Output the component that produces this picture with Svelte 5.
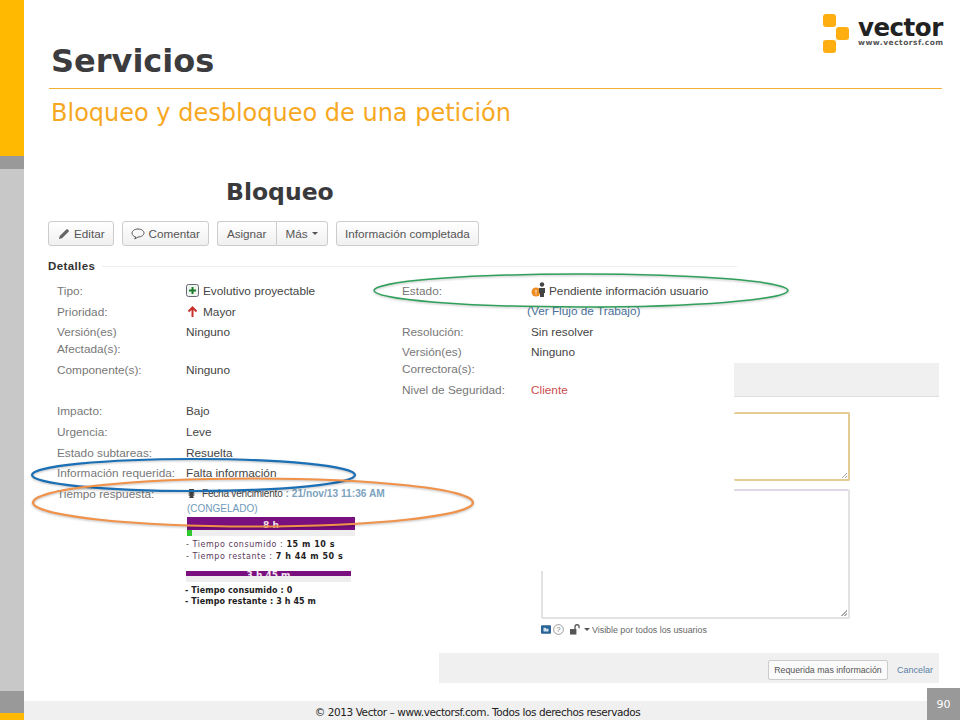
<script>
  const leftRows = [
    { label: 'Tipo:', value: 'Evolutivo proyectable', icon: 'plus' },
    { label: 'Prioridad:', value: 'Mayor', icon: 'up' },
    { label: 'Versión(es) Afectada(s):', value: 'Ninguno', tall: true },
    { label: 'Componente(s):', value: 'Ninguno', gap: true },
    { label: 'Impacto:', value: 'Bajo' },
    { label: 'Urgencia:', value: 'Leve' },
    { label: 'Estado subtareas:', value: 'Resuelta' },
    { label: 'Información requerida:', value: 'Falta información' }
  ]
</script>

<div class="slide">
  <aside class="rail">
    <div class="rail-top"></div>
    <div class="rail-band"></div>
    <div class="rail-mid"></div>
    <div class="rail-band rail-band-low"></div>
    <div class="rail-end"></div>
  </aside>

  <div class="page">
    <header class="head">
      <h1>Servicios</h1>
      <div class="logo">
        <svg class="logo-mark" viewBox="0 0 27 40" aria-hidden="true">
          <rect x="0" y="0" width="13" height="13" rx="3"/>
          <rect x="13" y="13" width="13" height="13" rx="3"/>
          <rect x="0" y="26" width="13" height="13" rx="3"/>
        </svg>
        <div class="logo-text">
          <span class="logo-name">vector</span>
          <span class="logo-url">www.vectorsf.com</span>
        </div>
      </div>
    </header>
    <h2>Bloqueo y desbloqueo de una petición</h2>
    <h3>Bloqueo</h3>

    <div class="toolbar">
      <button class="btn"><svg viewBox="0 0 14 12"><path d="M2 11l.7-3L9.300 1.400a1 1 0 011.400 0l.9.9a1 1 0 010 1.400L5 10.300z" fill="#666"/></svg>Editar</button>
      <button class="btn btn-comment"><svg viewBox="0 0 14 12"><path d="M7 1C3.700 1 1 2.800 1 5s2 3.600 3.600 3.900L3.800 11l3.200-2c3.300 0 6-1.800 6-4s-2.700-4-6-4z" fill="none" stroke="#555"/></svg>Comentar</button>
      <div class="btn-group">
        <button class="btn">Asignar</button>
        <button class="btn">Más<i class="caret"></i></button>
      </div>
      <button class="btn btn-done">Información completada</button>
    </div>

    <div class="section-title"><b>Detalles</b><span></span></div>

    <div class="columns">
      <div class="col-left">
        {#each leftRows as row}
          <div class="row" class:tall={row.tall} class:gap={row.gap}>
            <span class="lbl">{row.label}</span>
            <span class="val">
              {#if row.icon === 'plus'}
                <svg class="ico" viewBox="0 0 13 13"><rect x=".5" y=".5" width="12" height="12" rx="2" fill="#eef5ee" stroke="#667"/><path d="M6.500 3v7M3 6.500h7" stroke="#1c7a2c" stroke-width="2"/></svg>
              {:else if row.icon === 'up'}
                <svg class="ico" viewBox="0 0 13 13"><path d="M6.500 12V2.500M2.500 6.500l4-4 4 4" fill="none" stroke="#c9302c" stroke-width="2"/></svg>
              {/if}
              {row.value}
            </span>
          </div>
        {/each}
        <div class="row time-row">
          <span class="lbl">Tiempo respuesta:</span>
          <div class="sla">
            <div class="due">
              <svg class="clock" viewBox="0 0 9 12"><path d="M2 1h5v2l-1 1 2 1-2 1 2 1-2 1 1 2H2l1-2-2-1 2-1-2-1 2-1-1-1z" fill="#444"/></svg>
              <span class="due-lbl">Fecha vencimiento</span> <b>: 21/nov/13 11:36 AM</b>
            </div>
            <span class="frozen">(CONGELADO)</span>
            <div class="bar"><span>8 h</span></div>
            <div class="track"><i style="width:5px"></i></div>
            <div class="stat stat-first">- <span>Tiempo consumido</span> : <b>15 m 10 s</b></div>
            <div class="stat">- <span>Tiempo restante</span> : <b>7 h 44 m 50 s</b></div>
            <div class="bar bar-low"><span>3 h 45 m</span></div>
            <div class="track track-low"></div>
            <div class="stat stat-bold stat-first">- Tiempo consumido : 0</div>
            <div class="stat stat-bold">- Tiempo restante : 3 h 45 m</div>
          </div>
        </div>
      </div>

      <div class="col-right">
        <div class="row">
          <span class="lbl">Estado:</span>
          <span class="val val-state">
            <svg class="state" viewBox="0 0 17 15"><circle cx="5" cy="10" r="4.500" fill="#ee8c1f"/><path d="M5 8v2.500M5 11.500v1" stroke="#fff"/><circle cx="11" cy="2.500" r="2.200" fill="#444"/><path d="M8 6h6v5h-1v4H9v-4H8z" fill="#444"/></svg>
            Pendiente información usuario
          </span>
        </div>
        <a class="flow">(Ver Flujo de Trabajo)</a>
        <div class="row"><span class="lbl">Resolución:</span><span class="val">Sin resolver</span></div>
        <div class="row tall"><span class="lbl">Versión(es) Correctora(s):</span><span class="val">Ninguno</span></div>
        <div class="row"><span class="lbl">Nivel de Seguridad:</span><span class="val red">Cliente</span></div>
      </div>
    </div>

    <!-- restos del diálogo que asoman detrás de la captura -->
    <div class="dialog">
      <div class="dlg-head"></div>
      <div class="dlg-body">
        <div class="area area-focus"></div>
        <div class="area area-plain"></div>
        <div class="dlg-meta">
          <svg class="m-folder" viewBox="0 0 12 10"><rect width="12" height="10" rx="1" fill="#2a6496"/><path d="M3 3h2.500l1 1H9v3.500H3z" fill="#cfe0ee"/></svg>
          <svg class="m-help" viewBox="0 0 12 12"><circle cx="6" cy="6" r="5.300" fill="none" stroke="#777" stroke-width=".8"/><text x="6" y="9" text-anchor="middle">?</text></svg>
          <svg class="m-lock" viewBox="0 0 12 11"><rect x="0" y="5" width="7" height="6" fill="#555"/><path d="M5.500 5V2.500a2.200 2.200 0 014.400 0V4" fill="none" stroke="#555" stroke-width="1.400"/></svg>
          <i class="caret"></i>
          <span>Visible por todos los usuarios</span>
        </div>
      </div>
      <div class="dlg-foot">
        <button class="btn-req">Requerida mas información</button>
        <a>Cancelar</a>
      </div>
    </div>

    <svg class="marks" viewBox="0 0 936 720" aria-hidden="true">
      <ellipse cx="557" cy="290.500" rx="207" ry="16.500" stroke="#2ea05a"/>
      <ellipse cx="169.500" cy="475" rx="161.500" ry="16" stroke="#1a6fb5"/>
      <ellipse cx="229" cy="502.500" rx="220" ry="24" stroke="#f0924a"/>
    </svg>
  </div>

  <footer class="foot">
    <span>© 2013 Vector – www.vectorsf.com. Todos los derechos reservados</span>
  </footer>
  <div class="num">90</div>
</div>

<style>
  :global(body) { margin: 0; background: #fff; }

  .slide {
    position: relative;
    display: flex;
    width: 960px;
    height: 720px;
    overflow: hidden;
    background: #fff;
    font-family: "Liberation Sans", Arial, sans-serif;
  }

  .rail { display: flex; flex-direction: column; flex: 0 0 24px; z-index: 3; }
  .rail-top { height: 156px; background: #ffb900; }
  .rail-band { height: 13px; background: #999; }
  .rail-mid { flex: 1; background: #c8c8c8; }
  .rail-band-low { height: 22px; }
  .rail-end { height: 7px; background: #ffb900; }

  .page { position: relative; flex: 1; }

  .head {
    display: flex;
    justify-content: space-between;
    align-items: flex-start;
    height: 88px;
    margin: 0 18px 0 25px;
    padding: 0 0 0 2px;
    box-sizing: content-box;
    border-bottom: 1px solid #f2b132;
  }
  h1 {
    margin: 45px 0 0;
    font: bold 32px/1 "DejaVu Sans", Verdana, sans-serif;
    color: #3c3c3f;
  }
  .logo { display: flex; gap: 8px; margin: 14px -1px 0 0; }
  .logo-mark { width: 27px; height: 40px; fill: #ffae12; }
  .logo-text { display: flex; flex-direction: column; width: 85px; }
  .logo-name { font: bold 24.500px/20px "DejaVu Sans", sans-serif; color: #222; letter-spacing: -0.5px; margin-top: 4px; }
  .logo-url { font: bold 7.500px/9px "DejaVu Sans", sans-serif; color: #555; letter-spacing: .5px; white-space: nowrap; }

  h2 {
    margin: 11px 0 0 27px;
    font: 400 24px/27px "DejaVu Sans", Verdana, sans-serif;
    color: #f7a823;
  }
  h3 {
    margin: 51px 0 0 202px;
    font: bold 23.500px/28px "DejaVu Sans", Verdana, sans-serif;
    color: #3a3a3c;
  }

  .toolbar { display: flex; gap: 8px; margin: 15px 0 0 24px; }
  .btn {
    display: inline-flex;
    align-items: center;
    gap: 3px;
    height: 25px;
    padding: 0 8px;
    box-sizing: border-box;
    border: 1px solid #ccc;
    border-radius: 3px;
    background: linear-gradient(#fff, #f0f0f0);
    font: 11.700px "Liberation Sans", Arial, sans-serif;
    color: #555;
  }
  .btn svg { width: 14px; height: 12px; }
  .btn .caret { margin-left: 1px; }
  .btn-comment { gap: 4px; }
  .btn-done { padding: 0 8.500px; }
  .btn-group { display: flex; }
  .btn-group .btn { padding: 0 9px; }
  .btn-group .btn:first-child { border-radius: 3px 0 0 3px; border-right: 0; }
  .btn-group .btn:last-child { border-radius: 0 3px 3px 0; }
  .caret {
    display: inline-block;
    width: 0;
    height: 0;
    border: 3px solid transparent;
    border-top: 3px solid #555;
    border-bottom: 0;
  }

  .section-title { display: flex; align-items: center; gap: 7px; margin: 14px 0 0 24px; width: 689px; }
  .section-title b { font-size: 11.500px; letter-spacing: .4px; color: #333; }
  .section-title span { flex: 1; height: 1px; background: #eee; }

  .columns { display: flex; margin: 10px 0 0 33px; }
  .col-left { width: 345px; font-size: 11.800px; }
  .col-right { font-size: 11.800px; }

  .row { display: flex; height: 20.700px; line-height: 18px; color: #444; }
  .row.tall { height: 38px; }
  .row.gap { height: 41px; }
  .lbl { flex: 0 0 129px; width: 129px; padding-top: 1px; color: #777; line-height: 17px; }
  .tall .lbl { padding-right: 40px; box-sizing: border-box; }
  .val { display: inline-flex; align-items: flex-start; gap: 4px; white-space: nowrap; }
  .val-state { gap: 1px; }
  .ico { width: 13px; height: 13px; margin-top: 2px; }
  .state { width: 17px; height: 15px; flex: none; }
  .red { color: #cc4d4d; }
  .flow { display: block; margin: -1px 0 3px 125px; color: #4a6f9a; height: 18px; line-height: 18px; }

  .time-row { height: auto; }
  .sla { width: 170px; font-size: 10px; margin-top: 2px; }
  .due { display: flex; align-items: center; gap: 3px; height: 14px; line-height: 14px; white-space: nowrap; color: #444; }
  .due b { color: #7da3c0; font-size: 10.200px; }
  .due-lbl { letter-spacing: -.2px; }
  .clock { width: 9px; height: 12px; margin: 0 3px 0 1px; flex: none; }
  .frozen { display: block; margin: 1px 0 0 1px; line-height: 14px; font-size: 10px; color: #6f99ba; }
  .bar { width: 168px; height: 13px; margin: 1px 0 0 1px; background: #7a0f7f; color: #f3e6f2; font: bold 9px/13px "DejaVu Sans", sans-serif; text-align: center; overflow: hidden; }
  .bar span { position: relative; top: 2px; }
  .track { width: 168px; height: 6px; margin-left: 1px; background: #eee; display: flex; }
  .track i { background: #2fc82f; }
  .stat { font: 8px/12px "DejaVu Sans", sans-serif; letter-spacing: .55px; color: #444; white-space: nowrap; }
  .stat-first { margin-top: 3px; }
  .stat span { color: #5a3a5a; }
  .stat b { color: #222; }
  .bar-low { width: 165px; margin: 8px 0 0 0; height: 5px; line-height: 5px; }
  .track-low { width: 165px; margin-left: 0; height: 6px; }
  .stat-bold { font-weight: bold; color: #222; margin-left: -1px; letter-spacing: .1px; line-height: 11px; }

  .dialog { position: absolute; inset: 363px 21px 37px 415px; }
  .dlg-head { position: absolute; left: 295px; right: 0; top: 0; height: 33px; background: #f0f0f0; border-bottom: 1px solid #ddd; }
  .dlg-body { position: absolute; inset: 0; }
  .area { position: absolute; box-sizing: border-box; border-radius: 2px; background: #fff; }
  .area::after {
    content: "";
    position: absolute;
    right: 1px;
    bottom: 1px;
    width: 6px;
    height: 6px;
    background: linear-gradient(135deg, transparent 50%, #aaa 50%, #aaa 60%, transparent 60%, transparent 75%, #aaa 75%, #aaa 85%, transparent 85%);
  }
  .area-focus { left: 295px; width: 116px; top: 49px; height: 69px; border: 2px solid #e3cb92; border-left: 0; }
  /* el resto del borde queda tapado por la captura */
  .area-plain {
    left: 102px;
    width: 309px;
    top: 126px;
    height: 130px;
    border-right: 2px solid #e2e2e2;
    border-bottom: 2px solid #e2e2e2;
    background: linear-gradient(#e2e2e2, #e2e2e2) left bottom / 2px 46px no-repeat #fff;
  }
  .area-plain::before {
    content: "";
    position: absolute;
    left: 193px;
    right: 0;
    top: 0;
    height: 2px;
    background: #e0d8e6;
  }
  .dlg-meta { position: absolute; left: 102px; top: 261px; display: flex; align-items: center; gap: 2px; font-size: 8.850px; color: #666; }
  .m-folder { width: 10px; height: 9px; }
  .m-help { width: 11px; height: 11px; }
  .m-help text { font: 8.500px "Liberation Sans", sans-serif; fill: #777; }
  .m-lock { width: 11px; height: 11px; margin-left: 4px; }
  .dlg-meta .caret { margin-left: 1px; }
  .dlg-foot {
    position: absolute;
    left: 0; right: 0; bottom: 0;
    display: flex;
    justify-content: flex-end;
    align-items: center;
    gap: 9px;
    height: 30px;
    padding: 4px 6px 0 0;
    box-sizing: border-box;
    background: #f0f0f0;
  }
  .btn-req {
    width: 120px; height: 20px; padding: 0;
    border: 1px solid #ccc; border-radius: 2px;
    background: #fafafa;
    font: 8.800px "Liberation Sans", Arial, sans-serif;
    color: #555;
  }
  .dlg-foot a { font-size: 9px; color: #5b7fa6; }

  .marks { position: absolute; left: 0; top: 0; width: 936px; height: 720px; pointer-events: none; }
  .marks ellipse { fill: none; stroke-width: 1.500; filter: drop-shadow(0 1px 1px rgba(0,0,0,.25)); }
  .marks ellipse:nth-child(n+2) { stroke-width: 2.200; }

  .foot {
    position: absolute;
    left: 24px; right: 33px; bottom: 0;
    height: 19px;
    display: flex;
    align-items: center;
    justify-content: center;
    background: #f0f0f0;
    font: 10.500px "DejaVu Sans", Tahoma, sans-serif;
    color: #222;
    letter-spacing: -.42px;
    z-index: 2;
  }
  .foot span { position: relative; left: 2px; top: 1px; }
  .num {
    position: absolute;
    right: 0; bottom: 0;
    width: 33px; height: 32px;
    background: #999;
    color: #fff;
    font: 11px/34px "DejaVu Sans", sans-serif;
    text-align: center;
    z-index: 2;
  }
</style>
